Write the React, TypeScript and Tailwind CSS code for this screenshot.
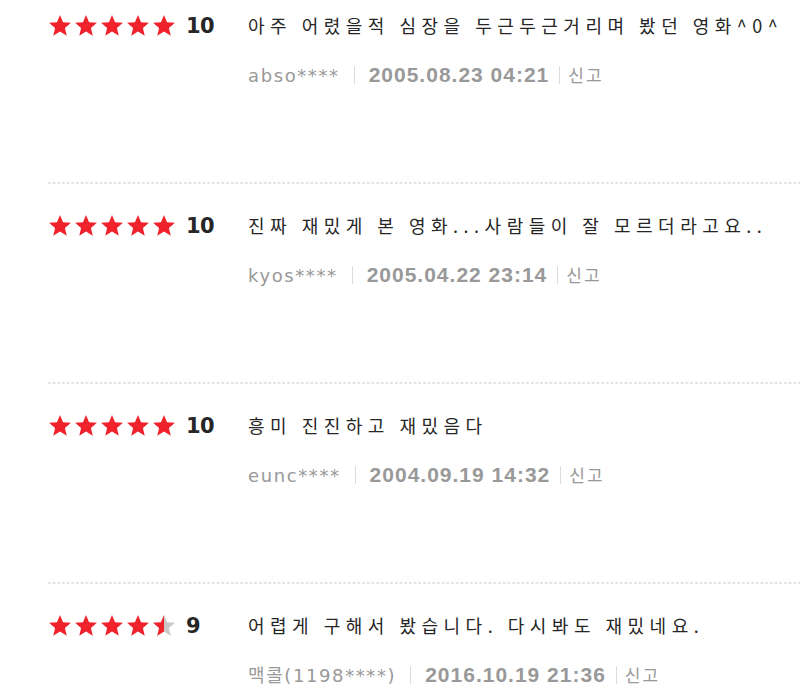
import React from 'react';

type Review = {
  score: number;
  text: string;
  user: string;
  date: string;
};

const reviews: Review[] = [
  { score: 10, text: '아주 어렸을적 심장을 두근두근거리며 봤던 영화^0^', user: 'abso****', date: '2005.08.23 04:21' },
  { score: 10, text: '진짜 재밌게 본 영화...사람들이 잘 모르더라고요..', user: 'kyos****', date: '2005.04.22 23:14' },
  { score: 10, text: '흥미 진진하고 재밌음다', user: 'eunc****', date: '2004.09.19 14:32' },
  { score: 9, text: '어렵게 구해서 봤습니다. 다시봐도 재밌네요.', user: '맥콜(1198****)', date: '2016.10.19 21:36' },
];

const STAR = '12,1 15.1,8.4 23.2,9 17,14.3 18.9,22.3 12,18 5.1,22.3 7,14.3 0.8,9 8.9,8.4';

function StarIcon({ color }: { color: string }) {
  return (
    <svg width="24" height="23" viewBox="0 0 24 23.5" className="block">
      <polygon points={STAR} fill={color} />
    </svg>
  );
}

function Star({ fill }: { fill: 'full' | 'half' | 'empty' }) {
  if (fill === 'full') return <StarIcon color="#f0222b" />;
  if (fill === 'empty') return <StarIcon color="#c9c9c9" />;
  return (
    <div className="relative w-[24px] h-[23px]">
      <StarIcon color="#c9c9c9" />
      <div className="absolute left-0 top-0 w-[12px] h-[23px] overflow-hidden">
        <StarIcon color="#f0222b" />
      </div>
    </div>
  );
}

function Stars({ score }: { score: number }) {
  const stars = [0, 1, 2, 3, 4].map(i => {
    const v = score / 2 - i;
    return v >= 1 ? 'full' : v >= 0.5 ? 'half' : 'empty';
  });
  return (
    <div className="flex gap-[2px]">
      {stars.map((s, i) => <Star key={i} fill={s as 'full' | 'half' | 'empty'} />)}
    </div>
  );
}

export default function App() {
  return (
    <div className="bg-white h-[691px] w-[800px] overflow-hidden pl-[48px]">
      {reviews.map((r, idx) => (
        <div key={idx}>
          <div className="h-[182px] pt-[10px] flex">
            <div className="w-[200px] shrink-0 h-[30px] flex items-center">
              <Stars score={r.score} />
              <span className="ml-[10px] mt-[3px] font-['DejaVu_Sans',sans-serif] font-bold text-[21px] text-[#262626] tracking-[-0.5px]">
                {r.score}
              </span>
            </div>
            <div className="flex flex-col">
              <div className="h-[30px] leading-[30px] whitespace-nowrap font-['Noto_Sans_CJK_KR',sans-serif] text-[18px] tracking-[5.5px] text-[#262626]">
                {r.text}
              </div>
              <div className="mt-[20px] h-[30px] flex items-center whitespace-nowrap text-[#999]">
                <span className="font-['DejaVu_Sans','Noto_Sans_CJK_KR',sans-serif] text-[18px] tracking-[1.6px]">{r.user}</span>
                <span className="inline-block w-px h-[18px] bg-[#dcdcdc] ml-[14px] mr-[14px]" />
                <span className="font-['Liberation_Sans',sans-serif] font-bold text-[21px] tracking-[1px]">{r.date}</span>
                <span className="inline-block w-px h-[18px] bg-[#dcdcdc] ml-[10px] mr-[8px]" />
                <span className="font-['Noto_Sans_CJK_KR',sans-serif] text-[17px] tracking-[2px]">신고</span>
              </div>
            </div>
          </div>
          <div className="h-[2px] mb-[16px] bg-[linear-gradient(to_right,#e4e4e4_50%,transparent_50%)] bg-[length:4.7px_2px] bg-repeat-x" />
        </div>
      ))}
    </div>
  );
}
